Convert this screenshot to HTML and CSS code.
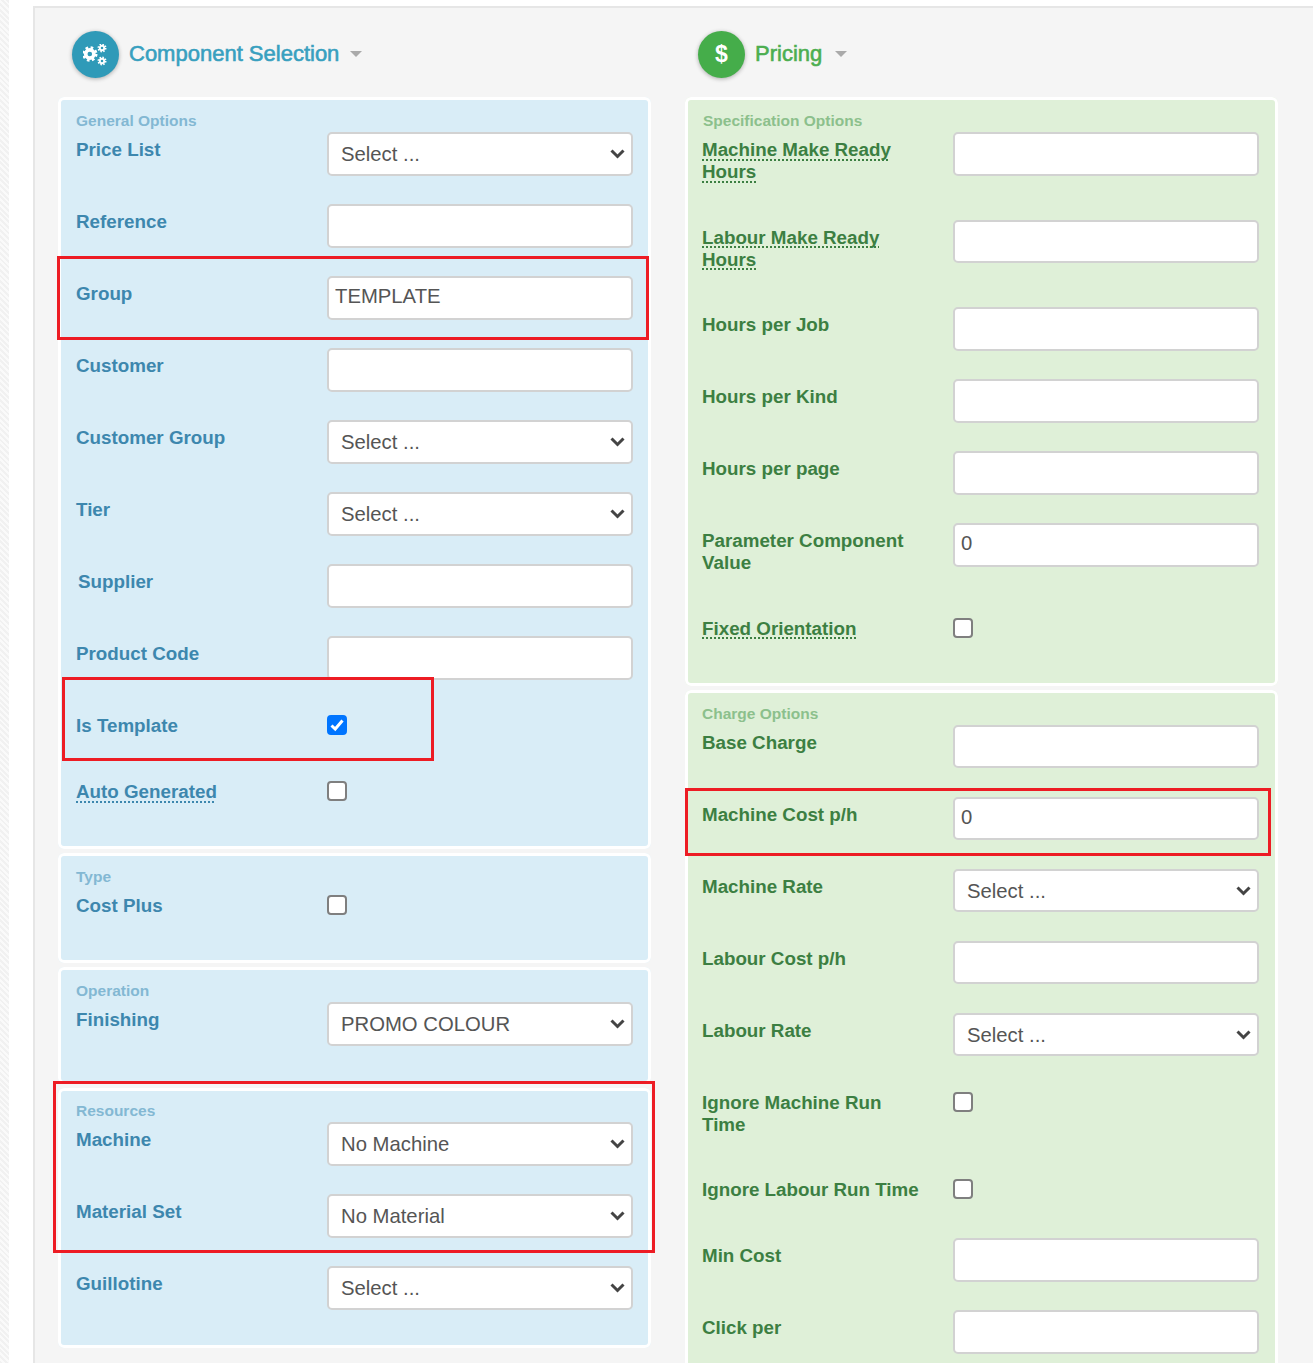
FILE: index.html
```html
<!DOCTYPE html>
<html lang="en">
<head>
<meta charset="utf-8">
<title>Component Selection</title>
<link rel="stylesheet" href="styles.css">
</head>
<body>
<div class="strip"></div>
<main class="panel">
  <section class="col col-blue">
    <header class="head">
      <span class="circle">
        <svg class="cogs" viewBox="0 0 25 22" width="25" height="22" aria-hidden="true">
          <circle cx="6.8" cy="10" r="4.1" fill="none" stroke="#fff" stroke-width="3.6"/>
          <circle cx="6.8" cy="10" r="6.4" fill="none" stroke="#fff" stroke-width="2.6" stroke-dasharray="2.6 2.43"/>
          <circle cx="19" cy="4" r="2.2" fill="none" stroke="#fff" stroke-width="1.9"/>
          <circle cx="19" cy="4" r="3.7" fill="none" stroke="#fff" stroke-width="1.6" stroke-dasharray="1.5 1.4"/>
          <circle cx="19" cy="17" r="2.2" fill="none" stroke="#fff" stroke-width="1.9"/>
          <circle cx="19" cy="17" r="3.7" fill="none" stroke="#fff" stroke-width="1.6" stroke-dasharray="1.5 1.4"/>
        </svg>
      </span>
      <h2>Component Selection</h2>
      <span class="caret"></span>
    </header>

    <fieldset class="group">
      <legend>General Options</legend>
      <div class="row"><label>Price List</label><select><option>Select ...</option></select></div>
      <div class="row"><label>Reference</label><input type="text"></div>
      <div class="row"><label>Group</label><input type="text" value="TEMPLATE"></div>
      <div class="row"><label>Customer</label><input type="text"></div>
      <div class="row"><label>Customer Group</label><select><option>Select ...</option></select></div>
      <div class="row"><label>Tier</label><select><option>Select ...</option></select></div>
      <div class="row"><label class="nudge">Supplier</label><input type="text"></div>
      <div class="row"><label>Product Code</label><input type="text"></div>
      <div class="row row-check"><label>Is Template</label><input type="checkbox" checked></div>
      <div class="row row-check"><label><span class="hint">Auto Generated</span></label><input type="checkbox"></div>
    </fieldset>

    <fieldset class="group">
      <legend>Type</legend>
      <div class="row row-check"><label>Cost Plus</label><input type="checkbox"></div>
    </fieldset>

    <fieldset class="group pad-select">
      <legend>Operation</legend>
      <div class="row"><label>Finishing</label><select><option>PROMO COLOUR</option></select></div>
    </fieldset>

    <fieldset class="group pad-select res">
      <legend>Resources</legend>
      <div class="row"><label>Machine</label><select><option>No Machine</option></select></div>
      <div class="row"><label>Material Set</label><select><option>No Material</option></select></div>
      <div class="row"><label>Guillotine</label><select><option>Select ...</option></select></div>
    </fieldset>
  </section>

  <section class="col col-green">
    <header class="head">
      <span class="circle"><span class="dollar">$</span></span>
      <h2>Pricing</h2>
      <span class="caret"></span>
    </header>

    <fieldset class="group">
      <legend class="nudge-legend">Specification Options</legend>
      <div class="row row-two"><label><span class="hint">Machine Make Ready</span><br><span class="hint">Hours</span></label><input type="text"></div>
      <div class="row row-two"><label><span class="hint">Labour Make Ready</span><br><span class="hint">Hours</span></label><input type="text"></div>
      <div class="row"><label>Hours per Job</label><input type="text"></div>
      <div class="row"><label>Hours per Kind</label><input type="text"></div>
      <div class="row"><label>Hours per page</label><input type="text"></div>
      <div class="row row-two"><label>Parameter Component<br>Value</label><input type="text" value="0"></div>
      <div class="row row-check"><label><span class="hint">Fixed Orientation</span></label><input type="checkbox"></div>
    </fieldset>

    <fieldset class="group">
      <legend>Charge Options</legend>
      <div class="row"><label>Base Charge</label><input type="text"></div>
      <div class="row"><label>Machine Cost p/h</label><input type="text" value="0"></div>
      <div class="row"><label>Machine Rate</label><select><option>Select ...</option></select></div>
      <div class="row"><label>Labour Cost p/h</label><input type="text"></div>
      <div class="row"><label>Labour Rate</label><select><option>Select ...</option></select></div>
      <div class="row row-two"><label>Ignore Machine Run<br>Time</label><input type="checkbox"></div>
      <div class="row row-check"><label>Ignore Labour Run Time</label><input type="checkbox"></div>
      <div class="row"><label>Min Cost</label><input type="text"></div>
      <div class="row"><label>Click per</label><input type="text"></div>
    </fieldset>
  </section>
</main>

<div class="mark mark-group"></div>
<div class="mark mark-template"></div>
<div class="mark mark-resources"></div>
<div class="mark mark-cost"></div>
</body>
</html>
```

FILE: styles.css
```css
* { box-sizing: border-box; }

html, body {
  margin: 0;
  height: 1363px;
  overflow: hidden;
  background: #fff;
}

body {
  position: relative;
  font-family: "Liberation Sans", Arial, sans-serif;
}

.strip {
  position: absolute;
  left: 0;
  top: 0;
  bottom: 0;
  width: 9px;
  background: repeating-linear-gradient(45deg, #f1f1f1 0 2px, #fafafa 2px 4px);
}

.panel {
  display: grid;
  grid-template-columns: 593px 593px;
  column-gap: 34px;
  align-items: start;
  margin: 6px 0 0 33px;
  padding: 23px 0 0 23px;
  height: 1400px;
  width: 1300px;
  background: #f5f5f5;
  border-top: 2px solid #e6e6e6;
  border-left: 2px solid #e6e6e6;
}

.head {
  display: flex;
  align-items: center;
  height: 47px;
  margin: 0 0 19px 13px;
}

.col-blue .head { margin-left: 14px; }

.circle {
  display: flex;
  align-items: center;
  justify-content: center;
  width: 47px;
  height: 47px;
  border-radius: 50%;
  box-shadow: 0 1px 4px rgba(0, 0, 0, .3);
  flex: none;
}

.col-blue .circle { background: #2f9ab8; }
.col-green .circle { background: #45ad4a; }

.dollar {
  color: #fff;
  font-size: 23px;
  font-weight: 700;
}

.head h2 {
  margin: 0 0 2px 10px;
  font-size: 22px;
  font-weight: 400;
  -webkit-text-stroke: 0.6px currentColor;
  line-height: 30px;
}

.col-blue h2 { color: #38a0bf; }
.col-green h2 { color: #4cae50; }

.caret {
  width: 0;
  height: 0;
  margin: 0 0 2px 11px;
  border-left: 6px solid transparent;
  border-right: 6px solid transparent;
  border-top: 6px solid #aaa;
}

.col-green .caret { margin-left: 13px; }

.group {
  position: relative;
  display: block;
  min-width: 0;
  margin: 0 0 4px;
  padding: 32px 15px 6px 15px;
  border: 3px solid #fff;
  border-radius: 6px;
}

.pad-select { padding-bottom: 7px; }

.col-blue .group { background: #d9edf7; }
.col-green .group { background: #dff0d8; }
.col-green .group { padding-left: 14px; }

.group legend {
  position: absolute;
  left: 15px;
  top: 12px;
  padding: 0;
  font-size: 15.5px;
  font-weight: 700;
  line-height: 18px;
}

.col-green .group legend { left: 14px; }
.col-green .group legend.nudge-legend { left: 15px; }
.group.res legend { top: 11px; }
.group.res { padding-top: 31px; }

.col-blue legend { color: #83b8d3; }
.col-green legend { color: #8cc08c; }

.row {
  display: flex;
  align-items: flex-start;
  height: 72px;
}

.row-two { height: 87.6px; }
.row-check { height: 66px; }
.row-check input { margin-top: 7px; }
.row-two input[type="checkbox"] { margin-top: 7px; }

.row label {
  flex: none;
  width: 251px;
  padding-top: 7px;
  font-size: 18.8px;
  font-weight: 700;
  line-height: 22px;
}

.row label.nudge { padding-left: 2px; }

.col-blue label { color: #3d87ae; }
.col-green label { color: #3c7f42; }

.hint {
  text-decoration: underline dotted 2px;
  text-underline-offset: 3px;
  text-decoration-skip-ink: none;
}

input[type="text"],
select {
  width: 305.5px;
  height: 43.5px;
  margin: 0;
  background-color: #fff;
  border: 2px solid #d2d2d2;
  border-radius: 5px;
  color: #555;
  font-family: "Liberation Sans", Arial, sans-serif;
  font-size: 20.3px;
}

input[type="text"] { padding: 0 6px 3px; }

select {
  appearance: none;
  padding: 0 30px 0 12px;
  background-image: url("data:image/svg+xml,%3Csvg xmlns='http://www.w3.org/2000/svg' width='15' height='10' viewBox='0 0 15 10'%3E%3Cpath d='M1.5 1.5 7.5 7.5l6-6' fill='none' stroke='%23444' stroke-width='3'/%3E%3C/svg%3E");
  background-repeat: no-repeat;
  background-position: right 6px center;
}

input[type="checkbox"] {
  appearance: none;
  width: 20px;
  height: 20px;
  margin-left: 0;
  margin-right: 0;
  margin-bottom: 0;
  flex: none;
  background: #fff;
  border: 2px solid #7f7f7f;
  border-radius: 4px;
}

input[type="checkbox"]:checked {
  border-color: #0075ff;
  background: #0075ff url("data:image/svg+xml,%3Csvg xmlns='http://www.w3.org/2000/svg' width='16' height='16' viewBox='0 0 16 16'%3E%3Cpath d='M2.5 8.5 6.2 12 13.5 3.5' fill='none' stroke='%23fff' stroke-width='3'/%3E%3C/svg%3E") center no-repeat;
}

.mark {
  position: absolute;
  border: 3px solid #ed1c24;
}

.mark-group { left: 57px; top: 256px; width: 592px; height: 84px; }
.mark-template { left: 62px; top: 677px; width: 372px; height: 84px; }
.mark-resources { left: 53px; top: 1081px; width: 602px; height: 172px; }
.mark-cost { left: 685px; top: 788px; width: 586px; height: 68px; }
```
